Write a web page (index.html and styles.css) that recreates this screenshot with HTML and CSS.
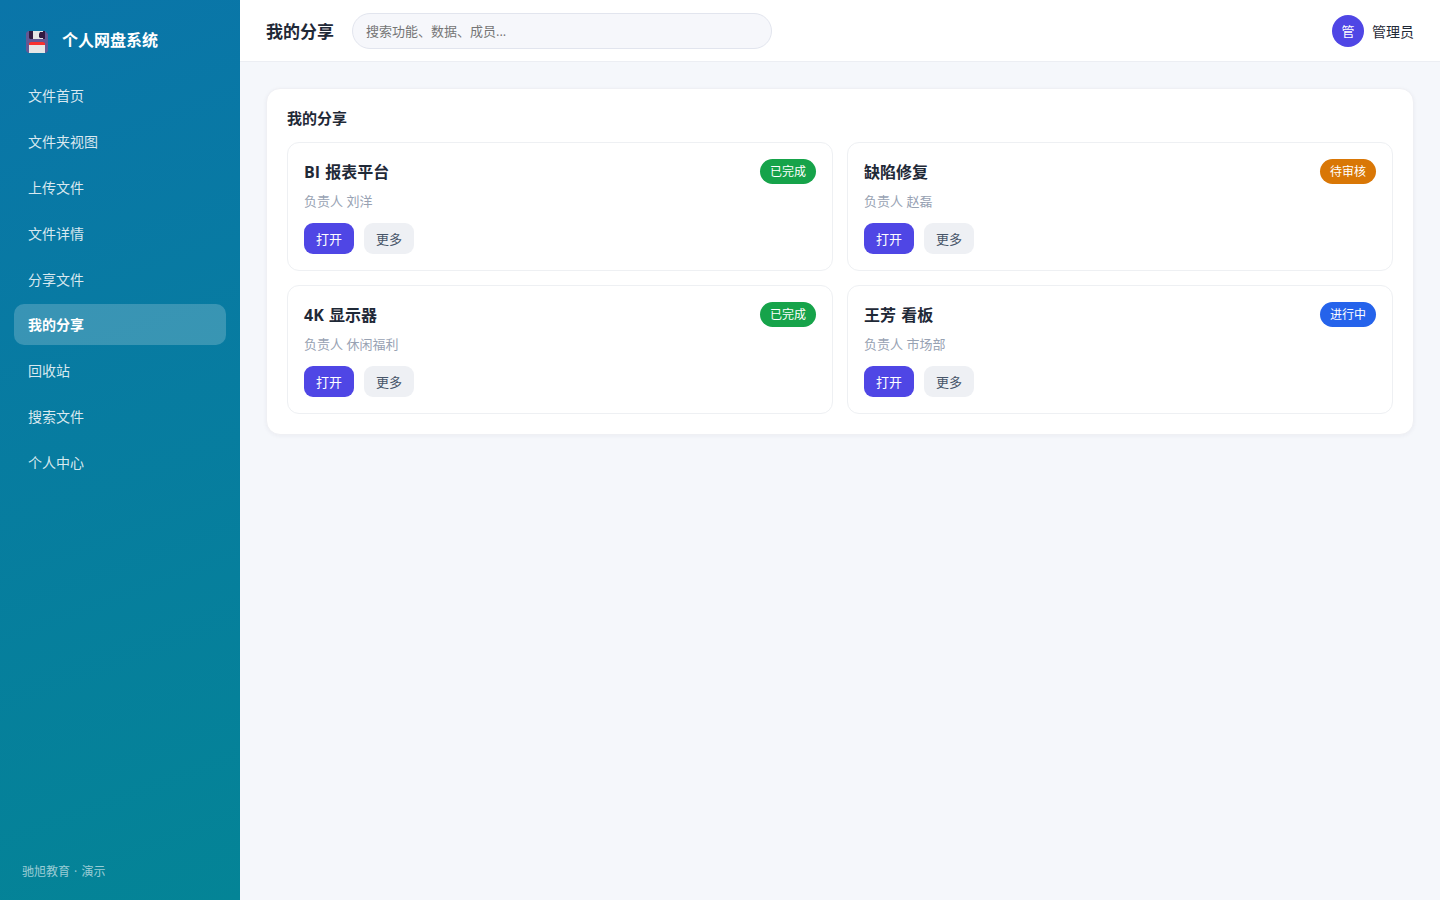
FILE: index.html
```html
<!DOCTYPE html>
<html lang="zh-CN">
<head>
  <meta charset="UTF-8">
  <meta name="viewport" content="width=device-width, initial-scale=1.0">
  <title>我的分享 - 个人网盘系统</title>
  <link rel="stylesheet" href="styles.css">
</head>
<body>
  <div class="layout">
    <aside class="sidebar">
      <div class="brand">
        <svg class="logo" viewBox="0 0 22 22" width="22" height="22">
          <path d="M2 0H19L22 3V20L20 22H2L0 20V2Z" fill="#635994"/>
          <path d="M3 0H19V8H4L3 7Z" fill="#321b41"/>
          <path d="M7 0H17V1H14L13 3V6L14 7H17V8H7Z" fill="#e6e6e6"/>
          <path d="M3 14V12L5 11H17L19 12V14Z" fill="#f8312f"/>
          <path d="M3 14H19V22H3Z" fill="#e6e6e6"/>
        </svg>
        <span>个人网盘系统</span>
      </div>
      <nav class="menu">
        <a class="menu-item">文件首页</a>
        <a class="menu-item">文件夹视图</a>
        <a class="menu-item">上传文件</a>
        <a class="menu-item">文件详情</a>
        <a class="menu-item">分享文件</a>
        <a class="menu-item active">我的分享</a>
        <a class="menu-item">回收站</a>
        <a class="menu-item">搜索文件</a>
        <a class="menu-item">个人中心</a>
      </nav>
      <div class="side-foot">驰旭教育 · 演示</div>
    </aside>
    <div class="main">
      <header class="topbar">
        <h1>我的分享</h1>
        <input class="search" type="text" placeholder="搜索功能、数据、成员...">
        <div class="user">
          <span class="avatar">管</span>
          <span>管理员</span>
        </div>
      </header>
      <main class="content">
        <section class="panel">
          <h2>我的分享</h2>
          <div class="grid">
            <div class="card">
              <div class="card-head"><h3>BI 报表平台</h3><span class="tag done">已完成</span></div>
              <p class="owner">负责人 刘洋</p>
              <div class="actions"><button class="btn primary">打开</button><button class="btn">更多</button></div>
            </div>
            <div class="card">
              <div class="card-head"><h3>缺陷修复</h3><span class="tag wait">待审核</span></div>
              <p class="owner">负责人 赵磊</p>
              <div class="actions"><button class="btn primary">打开</button><button class="btn">更多</button></div>
            </div>
            <div class="card">
              <div class="card-head"><h3>4K 显示器</h3><span class="tag done">已完成</span></div>
              <p class="owner">负责人 休闲福利</p>
              <div class="actions"><button class="btn primary">打开</button><button class="btn">更多</button></div>
            </div>
            <div class="card">
              <div class="card-head"><h3>王芳 看板</h3><span class="tag doing">进行中</span></div>
              <p class="owner">负责人 市场部</p>
              <div class="actions"><button class="btn primary">打开</button><button class="btn">更多</button></div>
            </div>
          </div>
        </section>
      </main>
    </div>
  </div>
</body>
</html>
```
FILE: styles.css
```css
* {
  box-sizing: border-box;
  margin: 0;
  padding: 0;
}
body {
  font-family: "Open Sans", "Noto Sans CJK SC", sans-serif;
  font-size: 14px;
  color: #1f2937;
  background: #f5f7fb;
}
.layout {
  display: flex;
  height: 100vh;
}
.sidebar {
  width: 240px;
  display: flex;
  flex-direction: column;
  padding: 22px 14px 18px;
  color: #fff;
  background: linear-gradient(160deg, #0a75a9, #048496);
}
.brand {
  display: flex;
  align-items: center;
  gap: 14px;
  height: 36px;
  padding-left: 12px;
  margin-bottom: 16px;
  font-size: 16px;
  font-weight: 700;
}
.brand span {
  line-height: 24px;
}
.logo {
  margin-top: 4px;
}
.menu {
  display: flex;
  flex-direction: column;
  gap: 4px;
}
.menu-item {
  height: 42px;
  line-height: 42px;
  padding: 1px 14px 0;
  border-radius: 10px;
  color: rgba(255,255,255,0.85);
}
.menu-item.active {
  height: 41px;
  line-height: 41px;
  padding-top: 0;
  background: rgba(255,255,255,0.2);
  color: #fff;
  font-weight: 700;
}
.side-foot {
  margin-top: auto;
  padding-left: 8px;
  font-size: 12px;
  line-height: 20px;
  word-spacing: 1px;
  color: rgba(255,255,255,0.6);
}
.main {
  flex: 1;
  min-width: 0;
}
.topbar {
  display: flex;
  align-items: center;
  gap: 18px;
  height: 62px;
  padding: 0 26px;
  background: #fff;
  border-bottom: 1px solid #eceef3;
}
.topbar h1 {
  font-size: 17px;
  line-height: 24px;
  padding-top: 2px;
}
.search {
  width: 420px;
  height: 36px;
  padding: 0 14px 0 13px;
  border: 1px solid #e2e5ee;
  border-radius: 18px;
  background: #f6f7fb;
  font: inherit;
  font-size: 13px;
}
.search::placeholder {
  color: #757575;
}
.user {
  display: flex;
  align-items: center;
  gap: 8px;
  margin-left: auto;
}
.avatar {
  width: 32px;
  height: 32px;
  line-height: 32px;
  border-radius: 50%;
  background: #4f46e5;
  color: #fff;
  font-size: 13px;
  text-align: center;
}
.content {
  padding: 26px;
}
.panel {
  padding: 20px;
  border: 1px solid #eff0f4;
  border-radius: 14px;
  background: #fff;
  box-shadow: 0 1px 4px rgba(30,41,80,0.05);
}
.panel h2 {
  font-size: 15px;
  line-height: 18px;
  margin-bottom: 15px;
}
.grid {
  display: grid;
  grid-template-columns: 1fr 1fr;
  gap: 14px;
}
.card {
  height: 129px;
  padding: 16px;
  border: 1px solid #eef0f3;
  border-radius: 12px;
}
.card-head {
  display: flex;
  justify-content: space-between;
  align-items: center;
  height: 25px;
}
.card h3 {
  font-size: 16px;
  line-height: 25px;
  padding-top: 2px;
  word-spacing: 1px;
}
.tag {
  height: 25px;
  line-height: 25px;
  padding: 0 10px;
  border-radius: 13px;
  color: #fff;
  font-size: 12px;
}
.tag.done {
  background: #16a34a;
}
.tag.wait {
  background: #d97706;
}
.tag.doing {
  background: #2563eb;
}
.owner {
  margin: 7px 0 12px;
  font-size: 13px;
  line-height: 20px;
  color: #98a2b3;
}
.actions {
  display: flex;
  gap: 10px;
}
.btn {
  width: 50px;
  height: 31px;
  padding-bottom: 1px;
  border: none;
  border-radius: 9px;
  background: #eef0f4;
  color: #475569;
  font: inherit;
  font-size: 13px;
}
.btn.primary {
  background: #4f46e5;
  color: #fff;
}
```
